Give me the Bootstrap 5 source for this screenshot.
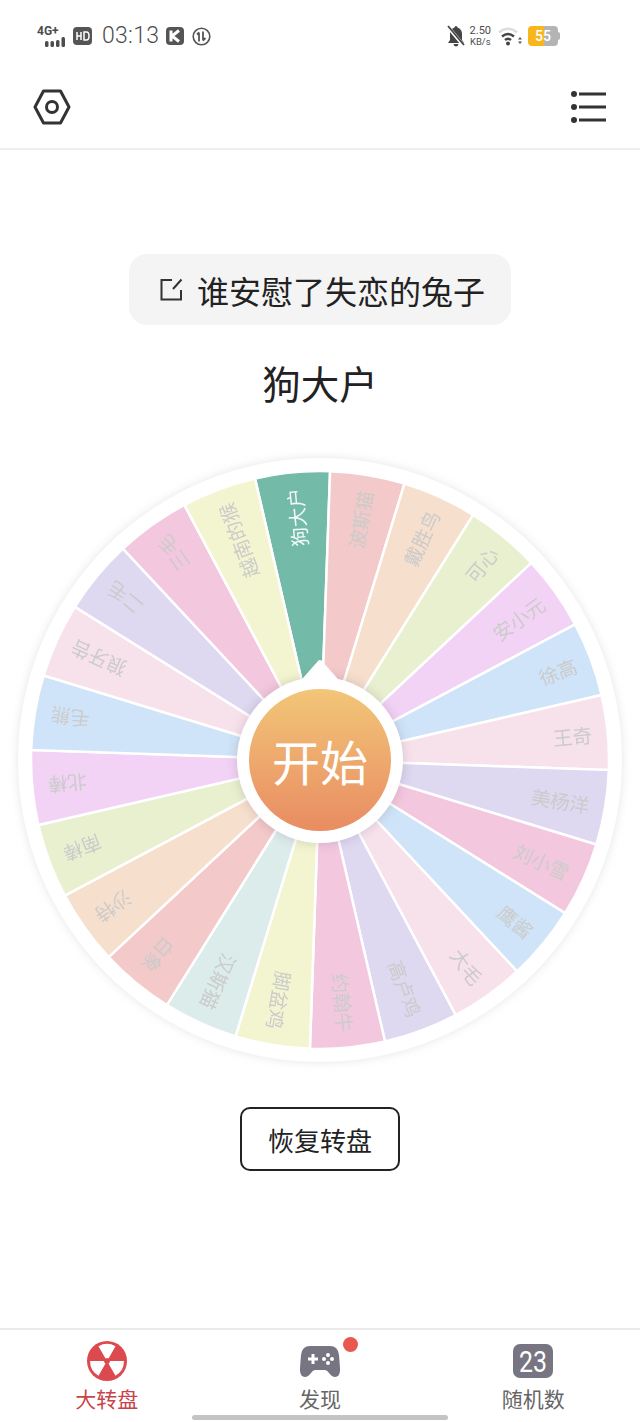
<!DOCTYPE html>
<html lang="zh">
<head>
    <meta charset="UTF-8">
    <meta name="viewport" content="width=device-width, initial-scale=1.0">
    <title>大转盘</title>
    <link href="https://cdn.jsdelivr.net/npm/bootstrap@5.3.0/dist/css/bootstrap.min.css" rel="stylesheet">
    <style>
        body {
            height: 1422px;
            overflow: hidden;
            font-family: "Noto Sans CJK SC", "Liberation Sans", sans-serif;
            color: #222;
        }
        .status-row {
            height: 72px;
            padding: 0 80px 0 37px;
            color: #4d4d4d;
            font-family: Roboto, sans-serif;
        }
        .net-block { width: 28px; }
        .net-label { font-size: 12px; font-weight: 700; line-height: 11px; }
        .clock { font-size: 23px; font-weight: 300; margin: 0 7px 0 10px; letter-spacing: .3px; }
        .speed { font-size: 11px; line-height: 11px; margin: 0 7px 0 5px; text-align: center; }
        .speed span { font-size: 9.5px; }
        .batt {
            width: 30px;
            height: 20px;
            margin-left: 6px;
            border-radius: 4px;
            font-size: 14px;
            font-weight: 500;
            line-height: 20px;
            text-align: center;
            color: #fff;
            background: linear-gradient(90deg, #f8b61c 53%, #b4b4b4 53%);
        }
        .batt-nub { width: 2px; height: 8px; background: #b4b4b4; border-radius: 0 2px 2px 0; }
        .top-bar { height: 78px; padding: 0 34px 6px 33px; border-bottom: 2px solid #eee; }
        .title-pill {
            width: 382px;
            height: 71px;
            margin-top: 104px;
            padding-left: 5px;
            background: #f4f4f4;
            border-radius: 18px;
            font-size: 32px;
            gap: 14px;
        }
        .winner { font-size: 38.5px; line-height: 54px; margin-top: 30px; }
        .wheel-box { width: 604px; height: 604px; margin-top: 49px; }
        .wheel-box svg { display: block; overflow: visible; }
        .start-hub {
            left: 219px;
            top: 219px;
            width: 166px;
            height: 166px;
            background: #fff;
            box-shadow: 0 0 12px rgba(90, 70, 90, .22);
        }
        .start-btn {
            width: 142px;
            height: 142px;
            padding: 0;
            border: 0;
            font-size: 48px;
            line-height: 1;
            color: #fff;
            background: linear-gradient(180deg, #f2c678, #e98c62);
        }
        .reset-btn {
            width: 160px;
            height: 64px;
            margin-top: 45px;
            padding: 0;
            border: 2px solid #222;
            border-radius: 10px;
            font-size: 26px;
            color: #222;
        }
        .tab-bar { height: 94px; border-top: 2px solid #eaeaea; }
        .tab-icon { width: 40px; height: 40px; margin-top: 11px; }
        .tab-label { font-size: 21px; line-height: 30px; margin-top: 2px; color: #666; }
        .tab-on { color: #c9444a; }
        .dot-new { width: 15px; height: 15px; left: 43px; top: -4px; background: #e8584f; }
        .home-line { left: 192px; bottom: 2px; width: 256px; height: 5px; background: #c4c4c4; }
    </style>
</head>
<body class="d-flex flex-column position-relative">
    <div class="status-row d-flex align-items-center">
        <div class="net-block d-flex flex-column">
            <div class="net-label">4G+</div>
            <svg class="align-self-end" width="20" height="10" viewBox="0 0 20 10" fill="#4d4d4d">
                <rect x="0" y="4" width="3.500" height="6" rx="1.500"/><rect x="5.500" y="4" width="3.500" height="6" rx="1.500"/>
                <rect x="11" y="3" width="3.500" height="7" rx="1.500"/><rect x="16.500" y="0" width="3.500" height="10" rx="1.500"/>
            </svg>
        </div>
        <svg class="ms-2" width="19" height="18" viewBox="0 0 19 18">
            <rect width="19" height="18" rx="4" fill="#555"/>
            <path d="M4 5v8M4 9h4M8 5v8M11 5v8h2.500q2.500 0 2.500-4t-2.500-4z" fill="none" stroke="#fff" stroke-width="1.500"/>
        </svg>
        <span class="clock">03:13</span>
        <svg width="18" height="18" viewBox="0 0 18 18">
            <rect width="18" height="18" rx="4" fill="#555"/>
            <path d="M5 3.500v11M13 3.500L6 9l7 5.500" fill="none" stroke="#fff" stroke-width="3"/>
        </svg>
        <svg class="ms-2" width="19" height="19" viewBox="0 0 19 19" fill="none" stroke="#555">
            <circle cx="9.500" cy="9.500" r="8.300" stroke-width="1.600"/>
            <path d="M7 5.500v9M7 5.500L5 7.500M11 4.500v9M11 13.500l2.500-2.500" stroke-width="1.800"/>
        </svg>
        <div class="ms-auto d-flex align-items-center">
            <svg width="18" height="22" viewBox="0 0 18 22" fill="#444">
                <path d="M9 1q1.500 0 1.500 1.500Q15 4 15 9v6l2 3H1l2-3V9q0-5 4.500-6.500Q7.500 1 9 1zM6.500 19h5q-.5 2.500-2.500 2.500T6.500 19z"/>
                <path d="M1 2l16 19" stroke="#fff" stroke-width="3.500"/><path d="M1 1l16 19" stroke="#444" stroke-width="1.800"/>
            </svg>
            <div class="speed">2.50<br><span>KB/s</span></div>
            <svg width="24" height="20" viewBox="0 0 24 20" fill="none">
                <path d="M1 6.500Q10-1 19 6.500" stroke="#ddd" stroke-width="2.500"/>
                <path d="M4 10.500q6-5 12 0" stroke="#444" stroke-width="2.500"/>
                <path d="M7 14q3-2.500 6 0" stroke="#444" stroke-width="2.500"/>
                <circle cx="10" cy="17.500" r="2" fill="#444"/>
                <path d="M22 11l-2 2.500h4zM22 18l-2-2.500h4z" fill="#555"/>
            </svg>
            <div class="batt">55</div>
            <div class="batt-nub"></div>
        </div>
    </div>

    <header class="top-bar d-flex align-items-center justify-content-between">
        <svg width="38" height="36" viewBox="0 0 38 36" fill="none" stroke="#333" stroke-width="3">
            <path d="M10.500 2h17L36 18l-8.500 16h-17L2 18z" stroke-linejoin="round"/>
            <circle cx="19" cy="18" r="5.500"/>
        </svg>
        <svg width="35" height="32" viewBox="0 0 35 32" fill="none" stroke="#333" stroke-width="3">
            <path d="M8 3h27M8 16h27M8 29h27"/>
            <g fill="#333" stroke="none"><circle cx="3" cy="3" r="3"/><circle cx="3" cy="16" r="3"/><circle cx="3" cy="29" r="3"/></g>
        </svg>
    </header>

    <main class="flex-grow-1 d-flex flex-column align-items-center">
        <div class="title-pill d-flex align-items-center justify-content-center">
            <svg width="23" height="23" viewBox="0 0 23 23" fill="none" stroke="#333" stroke-width="2">
                <path d="M12 2H1.500v19.500h19.500V12M13 11L21.500 1.500"/>
            </svg>
            <span>谁安慰了失恋的兔子</span>
        </div>
        <div class="winner">狗大户</div>

        <div class="wheel-box position-relative">
            <svg id="wheel" width="604" height="604" viewBox="-302 -302 604 604" style="filter: drop-shadow(0 0 5px rgba(0,0,0,.1))"></svg>
            <div class="start-hub position-absolute rounded-circle d-flex align-items-center justify-content-center">
                <button class="start-btn btn rounded-circle">开始</button>
            </div>
            <svg class="position-absolute" style="left:280px;top:198px" width="44" height="30" viewBox="0 0 44 30">
                <path d="M3 29L5 22L20 5Q22 3 24 5L39 22L41 29z" fill="#fff"/>
            </svg>
        </div>

        <button class="reset-btn btn">恢复转盘</button>
    </main>

    <nav class="tab-bar row g-0 text-center">
        <div class="col-4">
            <svg class="tab-icon d-block mx-auto" viewBox="-20 -20 40 40">
                <circle r="20" fill="#dc4a50"/>
                <path d="M-8.500-14.700A17 17 0 0 1 8.500-14.700L1.500-2.600A3 3 0 0 0-1.500-2.600z" fill="#fff"/>
                <path d="M-8.500-14.700A17 17 0 0 1 8.500-14.700L1.500-2.600A3 3 0 0 0-1.500-2.600z" fill="#fff" transform="rotate(120)"/>
                <path d="M-8.500-14.700A17 17 0 0 1 8.500-14.700L1.500-2.600A3 3 0 0 0-1.500-2.600z" fill="#fff" transform="rotate(240)"/>
            </svg>
            <div class="tab-label tab-on">大转盘</div>
        </div>
        <div class="col-4">
            <div class="tab-icon position-relative mx-auto">
                <svg class="d-block" width="40" height="40" viewBox="0 0 40 40">
                    <path d="M10 5h20q8 0 9 9l1 13q.5 9-5 9-3 0-6-4-2-3-4-3H15q-2 0-4 3-3 4-6 4-5.500 0-5-9l1-13q1-9 9-9z" fill="#777581"/>
                    <path d="M8 18h10M13 13v10" stroke="#fff" stroke-width="3"/>
                    <g fill="#fff"><circle cx="28" cy="14" r="2"/><circle cx="28" cy="22" r="2"/><circle cx="24" cy="18" r="2"/><circle cx="32" cy="18" r="2"/></g>
                </svg>
                <span class="dot-new position-absolute rounded-circle"></span>
            </div>
            <div class="tab-label">发现</div>
        </div>
        <div class="col-4">
            <svg class="tab-icon d-block mx-auto" viewBox="0 0 40 40">
                <rect y="3" width="40" height="34" rx="7" fill="#777581"/>
                <text x="20" y="30.500" text-anchor="middle" font-family="Roboto, sans-serif" font-size="29" textLength="28" lengthAdjust="spacingAndGlyphs" fill="#fff">23</text>
            </svg>
            <div class="tab-label">随机数</div>
        </div>
    </nav>
    <div class="home-line position-absolute rounded-pill"></div>

    <script>
        // 转盘数据，从顶部高亮那一格开始顺时针
        const slices = [
            ["狗大户", "#74baa9"], ["波斯猫", "#f3c9c9"], ["戴胜鸟", "#f6dfcd"], ["可心", "#e9f0d0"],
            ["安小元", "#f3d3f5"], ["徐高", "#cfe4f8"], ["王奇", "#f7e2ec"], ["美杨洋", "#ded8f1"],
            ["刘小雪", "#f3c8de"], ["鹰酱", "#cfe4f8"], ["大毛", "#f7e2ec"], ["高卢鸡", "#ded8f1"],
            ["约翰牛", "#f3c8de"], ["脚盆鸡", "#f3f5d0"], ["汉斯猫", "#dcecea"], ["白象", "#f3c9c9"],
            ["沙特", "#f6dfcd"], ["南棒", "#e9f0d0"], ["北棒", "#f3d3f5"], ["毛熊", "#cfe4f8"],
            ["狼牙告", "#f7e2ec"], ["二毛", "#ded8f1"], ["三毛", "#f3c8de"], ["越南的猴", "#f3f5d0"]
        ];
        const R = 289, START = -13, STEP = 15;
        const pt = (deg, r) => {
            const a = (deg - 90) * Math.PI / 180;
            return (r * Math.cos(a)).toFixed(2) + " " + (r * Math.sin(a)).toFixed(2);
        };
        let html = '<circle r="302" fill="#fff"/>';
        slices.forEach(([name, color], i) => {
            const a0 = START + i * STEP, a1 = a0 + STEP, mid = a0 + STEP / 2;
            html += `<path d="M0 0L${pt(a0, R)}A${R} ${R} 0 0 1 ${pt(a1, R)}Z" fill="${color}" stroke="#fff" stroke-width="2.5"/>`;
            html += `<text transform="rotate(${mid - 90}) translate(273 0)" text-anchor="end" dominant-baseline="central"
                font-size="19.5" fill="${i === 0 ? "#f4faf8" : "#cbcbcb"}">${name}</text>`;
        });
        document.getElementById("wheel").innerHTML = html;
    </script>
    <script src="https://cdn.jsdelivr.net/npm/bootstrap@5.3.0/dist/js/bootstrap.bundle.min.js"></script>
</body>
</html>
